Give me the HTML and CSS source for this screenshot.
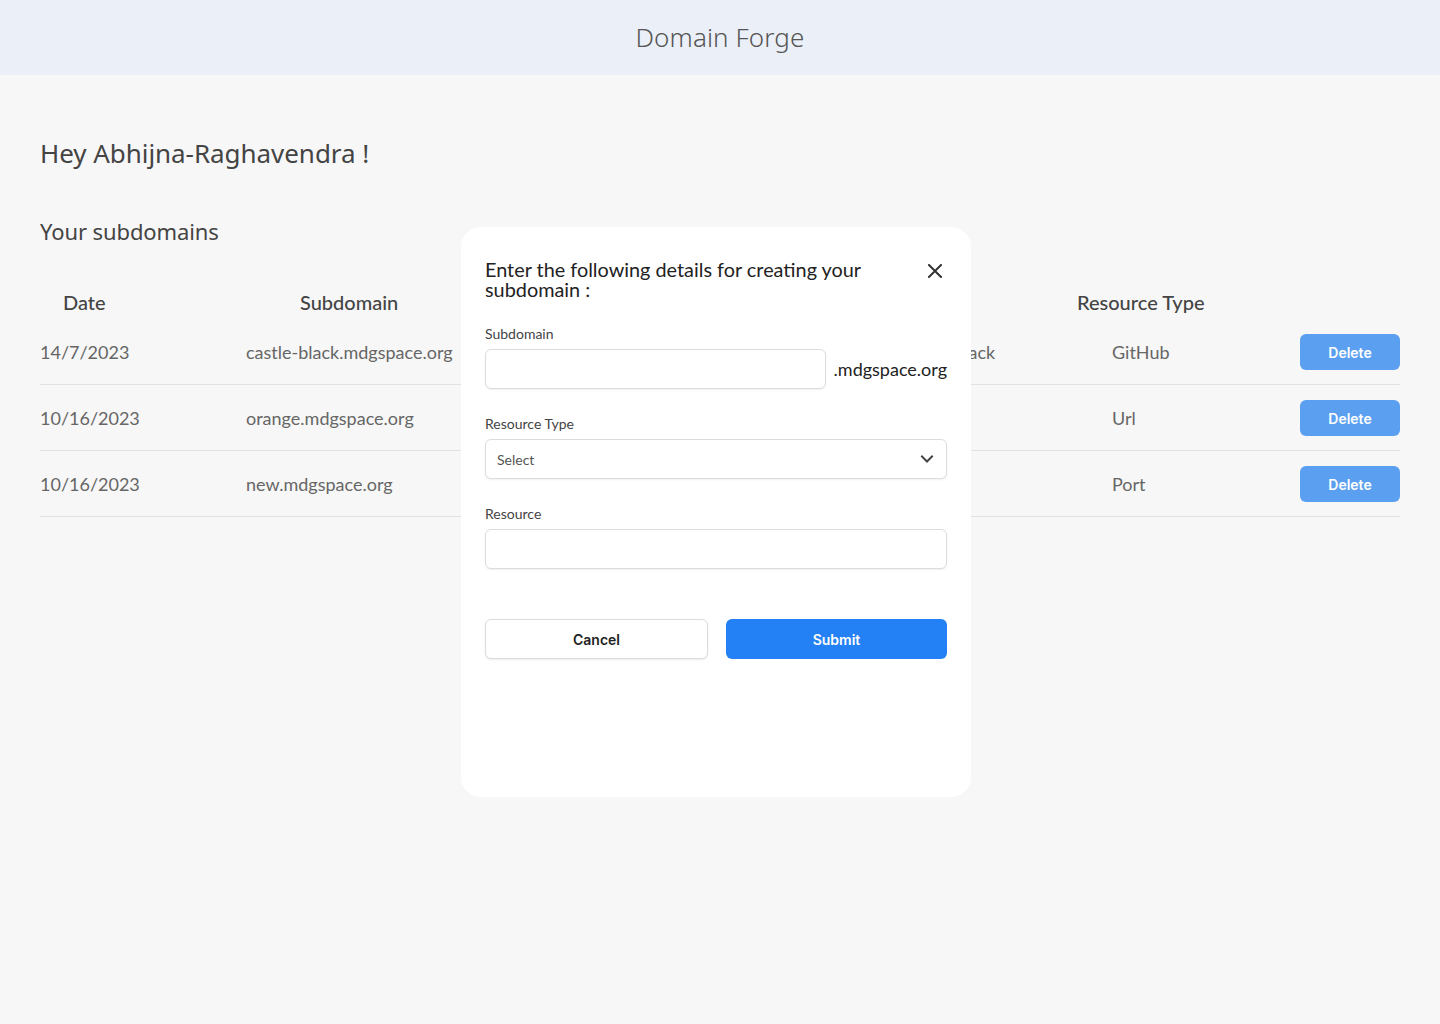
FILE: index.html
```html
<!DOCTYPE html>
<html lang="en">
<head>
<meta charset="utf-8">
<title>Domain Forge</title>
<link rel="stylesheet" href="styles.css">
</head>
<body>
<header class="topbar">
  <h1 class="brand">Domain Forge</h1>
</header>
<main class="main">
  <h2 class="greeting">Hey Abhijna-Raghavendra !</h2>
  <h3 class="section-title">Your subdomains</h3>
  <div class="table">
    <div class="thead">
      <div class="th th-date">Date</div>
      <div class="th th-sub">Subdomain</div>
      <div class="th th-res">Resource</div>
      <div class="th th-type">Resource Type</div>
      <div class="th"></div>
    </div>
    <div class="row">
      <div class="td">14/7/2023</div>
      <div class="td">castle-black.mdgspace.org</div>
      <div class="td td-res">castle-black</div>
      <div class="td">GitHub</div>
      <div class="td td-act"><button class="btn-delete">Delete</button></div>
    </div>
    <div class="row">
      <div class="td">10/16/2023</div>
      <div class="td">orange.mdgspace.org</div>
      <div class="td td-res">orange</div>
      <div class="td">Url</div>
      <div class="td td-act"><button class="btn-delete">Delete</button></div>
    </div>
    <div class="row">
      <div class="td">10/16/2023</div>
      <div class="td">new.mdgspace.org</div>
      <div class="td td-res">3000</div>
      <div class="td">Port</div>
      <div class="td td-act"><button class="btn-delete">Delete</button></div>
    </div>
  </div>
</main>

<div class="modal">
  <div class="modal-head">
    <p class="modal-title">Enter the following details for creating your subdomain :</p>
    <button class="close" aria-label="Close">
      <svg width="14" height="14" viewBox="0 0 14 14"><path d="M1 1 L13 13 M13 1 L1 13" stroke="#333" stroke-width="2" stroke-linecap="square" fill="none"/></svg>
    </button>
  </div>
  <div class="field">
    <label class="label">Subdomain</label>
    <div class="sub-row">
      <div class="input input-sub"></div>
      <span class="suffix">.mdgspace.org</span>
    </div>
  </div>
  <div class="field">
    <label class="label">Resource Type</label>
    <div class="input select">
      <span class="placeholder">Select</span>
      <svg width="14" height="10" viewBox="0 0 14 10"><path d="M2 2.5 L7 7.5 L12 2.5" stroke="#444" stroke-width="2" fill="none" stroke-linecap="square"/></svg>
    </div>
  </div>
  <div class="field">
    <label class="label">Resource</label>
    <div class="input"></div>
  </div>
  <div class="actions">
    <button class="btn btn-cancel">Cancel</button>
    <button class="btn btn-submit">Submit</button>
  </div>
</div>
</body>
</html>
```

FILE: styles.css
```css
* { box-sizing: border-box; }
html, body { margin: 0; padding: 0; }
body {
  background: #f7f7f7;
  font-family: "Lato", "Liberation Sans", sans-serif;
  color: #444;
  min-height: 1024px;
  position: relative;
}
.topbar {
  height: 75px;
  background: #ebeff8;
  display: flex;
  align-items: center;
  justify-content: center;
}
.brand {
  margin: 0;
  font-family: "Noto Sans", sans-serif;
  font-weight: 300;
  font-size: 26px;
  line-height: 34px;
  color: #555;
  letter-spacing: 0.1px;
  margin-bottom: 1px;
}
.main {
  padding: 0 40px;
}
.greeting {
  margin: 0;
  padding-top: 61px;
  font-family: "Noto Sans", sans-serif;
  font-weight: 400;
  font-size: 26px;
  line-height: 34px;
  color: #444;
  letter-spacing: -0.05px;
}
.section-title {
  margin: 0;
  padding-top: 46px;
  font-family: "Noto Sans", sans-serif;
  font-weight: 400;
  font-size: 22px;
  line-height: 30px;
  color: #444;
  letter-spacing: -0.1px;
}
.table {
  margin-top: 41px;
}
.thead, .row {
  display: grid;
  grid-template-columns: 206px 454px 412px 188px 100px;
  align-items: center;
}
.thead { height: 30px; }
.th {
  font-size: 20px;
  font-weight: 500;
  color: #444;
  white-space: nowrap;
}
.th-date { padding-left: 23px; }
.th-sub { padding-left: 54px; }
.th-res { padding-left: 150px; }
.th-type { margin-left: -35px; }
.row {
  height: 66px;
  border-bottom: 1px solid #e2e2e2;
}
.thead + .row { margin-top: 2px; }
.row .td { padding-top: 1px; }
.td {
  font-size: 18px;
  line-height: 22px;
  color: #666;
  white-space: nowrap;
}
.td-res { padding-left: 202px; }
.td-act { display: flex; justify-content: flex-end; }
.btn-delete {
  width: 100px;
  height: 36px;
  border: none;
  border-radius: 6px;
  background: #5b9ff1;
  color: #fff;
  font-family: "Inter", sans-serif;
  font-weight: 600;
  font-size: 14px;
}

.modal {
  position: absolute;
  left: 461px;
  top: 227px;
  width: 510px;
  height: 570px;
  background: #fff;
  border-radius: 20px;
  padding: 32px 24px 24px;
}
.modal-head {
  display: flex;
  justify-content: space-between;
  align-items: flex-start;
}
.modal-title {
  margin: 0;
  font-size: 19.85px;
  line-height: 20px;
  color: #222;
  width: 420px;
}
.close {
  border: none;
  background: none;
  padding: 0;
  margin: 5px 5px 0 0;
  width: 14px;
  height: 14px;
  display: flex;
}
.field { margin-top: 26px; }
.label {
  display: block;
  font-size: 14px;
  line-height: 17px;
  color: #444;
  margin-bottom: 7px;
}
.input {
  height: 40px;
  border: 1px solid #dcdcdc;
  border-radius: 6px;
  background: #fff;
  box-shadow: 0 1px 2px rgba(0,0,0,0.06);
}
.sub-row {
  display: flex;
  align-items: center;
  gap: 8px;
}
.input-sub { width: 341px; }
.suffix {
  font-size: 18px;
  color: #222;
}
.select {
  display: flex;
  align-items: center;
  justify-content: space-between;
  padding: 0 12px 0 11px;
}
.placeholder {
  font-size: 14px;
  color: #555;
}
.actions {
  margin-top: 50px;
  display: flex;
  gap: 18px;
}
.btn {
  flex: 1;
  height: 40px;
  border-radius: 6px;
  font-family: "Inter", sans-serif;
  font-weight: 600;
  font-size: 14px;
}
.btn-cancel {
  background: #fff;
  border: 1px solid #dcdcdc;
  color: #222;
  box-shadow: 0 1px 2px rgba(0,0,0,0.08);
}
.btn-submit {
  background: #2381f5;
  border: none;
  color: #fff;
}
```
